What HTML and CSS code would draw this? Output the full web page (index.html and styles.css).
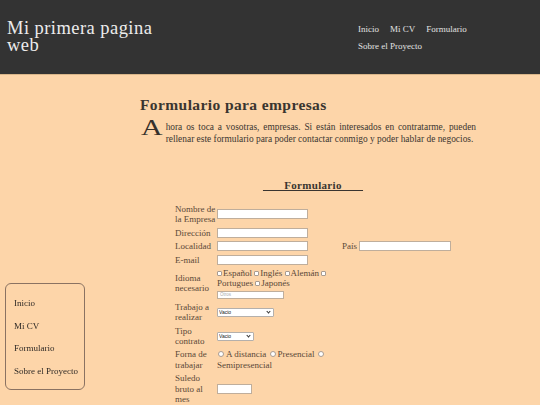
FILE: index.html
```html
<!DOCTYPE html>
<html lang="es">
<head>
<meta charset="utf-8">
<title>Formulario</title>
<link rel="stylesheet" href="styles.css">
</head>
<body>
<header class="top">
  <h1 class="site-title">Mi primera pagina web</h1>
  <nav class="top-nav">
    <a href="#">Inicio</a>
    <a href="#">Mi CV</a>
    <a href="#">Formulario</a>
    <a href="#">Sobre el Proyecto</a>
  </nav>
</header>

<aside class="side">
  <a href="#">Inicio</a>
  <a href="#">Mi CV</a>
  <a href="#">Formulario</a>
  <a href="#">Sobre el Proyecto</a>
</aside>

<main class="main">
  <h2 class="page-title">Formulario para empresas</h2>
  <p class="intro"><span class="dropcap">A</span>hora os toca a vosotras, empresas. Si están interesados en contratarme, pueden rellenar este formulario para poder contactar conmigo y poder hablar de negocios.</p>

  <section class="form-section">
    <h3 class="form-title">&nbsp;&nbsp;&nbsp;&nbsp;&nbsp;&nbsp;&nbsp;Formulario&nbsp;&nbsp;&nbsp;&nbsp;&nbsp;&nbsp;&nbsp;</h3>
    <form class="form">
      <label class="lbl">Nombre de la Empresa</label>
      <div class="val"><input class="txt" type="text"></div>

      <label class="lbl">Dirección</label>
      <div class="val"><input class="txt" type="text"></div>

      <label class="lbl">Localidad</label>
      <div class="val"><input class="txt" type="text"></div>
      <label class="lbl lbl-pais">País</label>
      <div class="val val-pais"><input class="txt txt-pais" type="text"></div>

      <label class="lbl">E-mail</label>
      <div class="val"><input class="txt" type="email"></div>

      <label class="lbl">Idioma necesario</label>
      <div class="val val-text">
        <input class="chk" type="checkbox">Español <input class="chk" type="checkbox">Inglés <input class="chk" type="checkbox">Alemán <input class="chk" type="checkbox"> Portugues <input class="chk" type="checkbox">Japonés
        <input class="txt txt-otros" type="text" placeholder="Otros">
      </div>

      <label class="lbl">Trabajo a realizar</label>
      <div class="val">
        <span class="sel-wrap sel-long"><select class="sel"><option>Vacio</option></select></span>
      </div>

      <label class="lbl">Tipo contrato</label>
      <div class="val">
        <span class="sel-wrap sel-short"><select class="sel"><option>Vacio</option></select></span>
      </div>

      <label class="lbl">Forna de trabajar</label>
      <div class="val val-text">
        <input class="rad" type="radio" name="forma">A distancia <input class="rad" type="radio" name="forma">Presencial <input class="rad" type="radio" name="forma"> Semipresencial
      </div>

      <label class="lbl">Suledo bruto al mes</label>
      <div class="val"><input class="txt txt-num" type="text"></div>
    </form>
  </section>
</main>
</body>
</html>
```

FILE: styles.css
```css
html, body {
  margin: 0;
  padding: 0;
}

body {
  background: #fdd5a9;
  font-family: "Liberation Serif", "Times New Roman", serif;
  color: #3a3530;
}

a {
  text-decoration: none;
  color: inherit;
}

/* Header */
.top {
  display: flex;
  align-items: flex-start;
  height: 74px;
  background: #333333;
  border-bottom: 1px solid #d9b68a;
  padding-left: 7px;
}

.site-title {
  flex: 0 0 auto;
  max-width: 165px;
  margin: 20px 186px 0 0;
  font-weight: normal;
  font-size: 18.5px;
  line-height: 17px;
  letter-spacing: 0.45px;
  color: #ececec;
}

.top-nav {
  display: flex;
  flex-wrap: wrap;
  column-gap: 11px;
  row-gap: 5px;
  width: 120px;
  margin-top: 23px;
  font-size: 9px;
  line-height: 12px;
  color: #e2e2e2;
}

/* Side menu (fixed floating box) */
.side {
  position: fixed;
  left: 5px;
  bottom: 15px;
  width: 80px;
  box-sizing: border-box;
  display: flex;
  flex-direction: column;
  gap: 12px;
  padding: 14px 0 13px 8px;
  border: 1px solid #8a7262;
  border-radius: 6px;
  font-size: 9px;
  line-height: 10.5px;
  color: #2f2a26;
}

/* Main */
.main {
  margin-left: 140px;
  width: 346px;
  padding-top: 21px;
}

.page-title {
  margin: 0;
  font-size: 15.5px;
  line-height: 17px;
  letter-spacing: 0.4px;
  font-weight: bold;
  color: #3a3530;
}

.intro {
  margin: 8px 10px 0 0;
  font-size: 9.4px;
  line-height: 12px;
  text-align: justify;
  color: #3c3631;
}

.dropcap {
  float: left;
  font-size: 23px;
  line-height: 23px;
  margin: -5.5px 8px 0 1px;
  transform: scaleX(1.3);
  transform-origin: left center;
  color: #35302b;
}

.form-section {
  margin-top: 34px;
}

.form-title {
  margin: 0;
  text-align: center;
  font-size: 11px;
  line-height: 13px;
  letter-spacing: 0.3px;
  font-weight: bold;
  text-decoration: underline;
  text-underline-offset: 1px;
  color: #3a3530;
}

/* Form grid */
.form {
  display: grid;
  grid-template-columns: 42px 125px 17px 92px;
  row-gap: 3px;
  align-items: center;
  margin: 12px 0 0 35px;
  font-size: 9px;
  line-height: 10.4px;
  color: #5a4838;
}

.lbl {
  grid-column: 1;
}

.val {
  grid-column: 2;
}

.lbl-pais {
  grid-column: 3;
  grid-row: 3;
}

.val-pais {
  grid-column: 4;
  grid-row: 3;
}

.txt {
  display: block;
  box-sizing: border-box;
  width: 91px;
  height: 10px;
  margin: 0;
  padding: 0 2px;
  border: 1px solid #bfae9c;
  background: #fff;
  font-size: 5px;
}

.txt-pais {
  width: 92px;
}

.txt-otros {
  width: 67px;
  height: 8px;
  margin-top: 2px;
  font-size: 4.5px;
}

.txt-otros::placeholder {
  color: #a9a9a9;
}

.txt-num {
  width: 35px;
}

.chk,
.rad {
  appearance: none;
  -webkit-appearance: none;
  display: inline-block;
  width: 5px;
  height: 5px;
  margin: 0 1px 0 0;
  border: 1px solid #a89c92;
  background: #fff;
  vertical-align: 0;
  box-sizing: border-box;
}

.chk {
  border-radius: 1px;
}

.rad {
  width: 6px;
  height: 6px;
  border-radius: 50%;
  margin: 0 2px 0 1px;
}

.sel-wrap {
  position: relative;
  display: block;
  height: 9px;
}

.sel-wrap::after {
  content: "";
  position: absolute;
  right: 4px;
  top: 2px;
  width: 2px;
  height: 2px;
  border-right: 1px solid #333;
  border-bottom: 1px solid #333;
  transform: rotate(45deg);
  pointer-events: none;
}

.sel-long {
  width: 57px;
}

.sel-short {
  width: 37px;
}

.sel {
  appearance: none;
  -webkit-appearance: none;
  display: block;
  box-sizing: border-box;
  width: 100%;
  height: 9px;
  margin: 0;
  padding: 0 0 0 1px;
  border: 1px solid #b4b0ac;
  border-radius: 1px;
  background: #fff;
  font-family: "Liberation Sans", Arial, sans-serif;
  font-size: 5px;
  line-height: 7px;
  color: #222;
}
```
